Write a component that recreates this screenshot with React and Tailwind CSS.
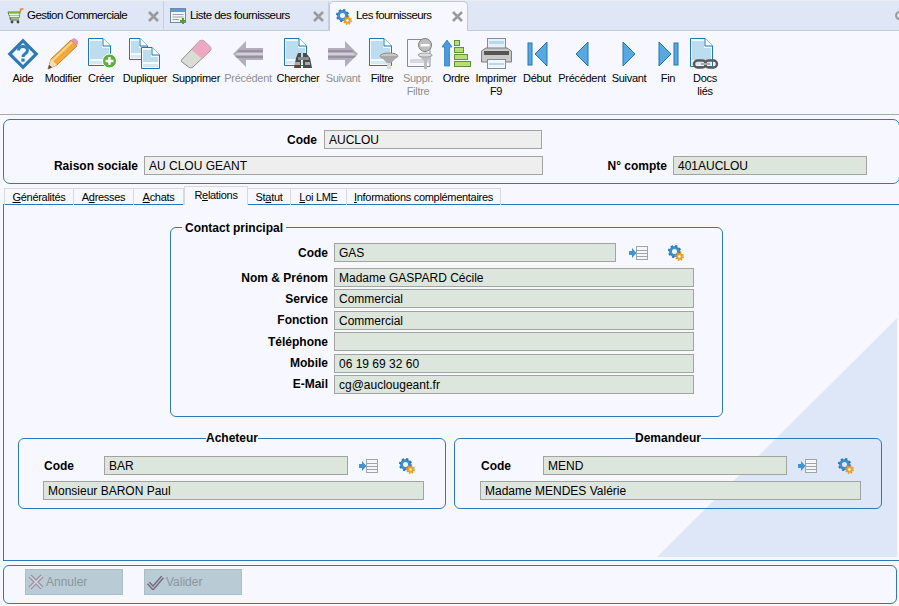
import React from 'react'

const BLUE = '#1f76b8'

function Page({ x = 0, y = 0, w = 22, h = 28 }) {
  const f = 8
  return (
    <g transform={`translate(${x} ${y})`}>
      <path d={`M.5 .5H${w - f}L${w - .5} ${f}V${h - .5}H.5Z`} fill="#f4f9fd" stroke={BLUE} />
      <path d={`M${w - f} .5V${f}H${w - .5}`} fill="#fff" stroke={BLUE} />
      <rect x="2" y="3" width={w - f - 3} height={f - 1} fill="#bcdcf0" />
      <rect x="2" y={f + 2} width={w - 4} height={h - f - 9} fill="#bcdcf0" />
      <rect x="2" y={h - 5} width={w - 4} height="3" fill="#d4e8f5" />
    </g>
  )
}

function Gears({ s = 16 }) {
  return (
    <svg width={s} height={s} viewBox="0 0 16 16">
      <circle cx="6.5" cy="6.5" r="4" fill="none" stroke="#3f8fd0" strokeWidth="3" />
      <circle cx="6.5" cy="6.5" r="5.6" fill="none" stroke="#2d78b8" strokeWidth="2" strokeDasharray="2.2 2.2" />
      <circle cx="11.5" cy="11.5" r="2.3" fill="#fff" stroke="#f0a020" strokeWidth="2" />
      <circle cx="11.5" cy="11.5" r="3.7" fill="none" stroke="#e89010" strokeWidth="1.4" strokeDasharray="1.5 1.4" />
    </svg>
  )
}

function ListArrow() {
  return (
    <svg width="19" height="14" viewBox="0 0 19 14">
      <path d="M0 5H3V2L7.5 7L3 12V9H0Z" fill="#3f94d6" />
      <rect x="7.5" y=".5" width="11" height="13" fill="#f4f6f8" stroke="#9ea4a8" />
      <path d="M8 4.5H18M8 7.5H18M8 10.5H18" stroke="#9ea4a8" />
    </svg>
  )
}

function CloseX() {
  return (
    <svg width="11" height="11" viewBox="0 0 11 11">
      <path d="M1 1L10 10M10 1L1 10" stroke="#9b9b9b" strokeWidth="2.6" />
    </svg>
  )
}

function CartIcon() {
  return (
    <svg width="17" height="16" viewBox="0 0 17 16">
      <path d="M1 4H13L12 10H3Z" fill="#a6cf72" stroke="#5c8a3a" />
      <path d="M2 6.5H12.5M2.5 8.5H12" stroke="#e9f3dc" />
      <path d="M13 4L14 1H16.5" fill="none" stroke="#e8821e" strokeWidth="1.6" />
      <path d="M3 10L3.5 12H12" fill="none" stroke="#555" />
      <circle cx="5" cy="14" r="1.4" fill="#444" />
      <circle cx="11" cy="14" r="1.4" fill="#444" />
    </svg>
  )
}

function ListIcon() {
  return (
    <svg width="17" height="17" viewBox="0 0 17 17">
      <rect x=".5" y=".5" width="15" height="14" fill="#f5f5ee" stroke="#6f8aa3" />
      <rect x="1" y="1" width="14" height="3" fill="#5f9bd0" />
      <path d="M2.5 6.5H13.5M2.5 9H13.5M2.5 11.5H9" stroke="#9aa4ae" />
      <path d="M10 12H12V10H14V12H16V14H14V16H12V14H10Z" fill="#4fa02c" />
    </svg>
  )
}

function HelpIcon() {
  return (
    <svg width="32" height="32" viewBox="0 0 32 32">
      <path d="M16 .5L31.5 16L16 31.5L.5 16Z" fill="#2f78b4" />
      <path d="M16 5L27 16L16 27L5 16Z" fill="#f2f8fd" stroke="#8cc0e6" />
      <path d="M11.5 12.5C11.5 7 20.5 7 20.5 12.5C20.5 15.5 16 15.5 16 19" fill="none" stroke="#2f7fc0" strokeWidth="3" />
      <rect x="14.4" y="20.5" width="3.2" height="3.2" fill="#2f7fc0" />
    </svg>
  )
}

function PencilIcon() {
  return (
    <svg width="32" height="32" viewBox="0 0 32 32">
      <path d="M1 31L4 21L24 2L30 8L10 27Z" fill="#f4a93a" stroke="#a9742b" strokeWidth=".8" />
      <path d="M5 23L25 4" stroke="#fbd78c" strokeWidth="2" />
      <path d="M1 31L4 21L10 27Z" fill="#f3dfb8" />
      <path d="M1 31L2.3 26.8L5 29.6Z" fill="#444" />
      <path d="M24 2L26 .6C27 0 28 0 29 1L30.6 2.8C31.4 3.8 31.4 5 30.6 6L30 8Z" fill="#e893b2" />
    </svg>
  )
}

function NewIcon() {
  return (
    <svg width="30" height="32" viewBox="0 0 30 32">
      <Page w="23" h="28" />
      <circle cx="21.5" cy="23" r="7" fill="#5db03a" stroke="#fff" />
      <path d="M17.5 23H25.5M21.5 19V27" stroke="#fff" strokeWidth="2.4" />
    </svg>
  )
}

function DupIcon() {
  return (
    <svg width="32" height="32" viewBox="0 0 32 32">
      <Page w="19" h="22" />
      <Page x="12" y="9" w="19" h="22" />
    </svg>
  )
}

function EraserIcon() {
  return (
    <svg width="32" height="30" viewBox="0 0 32 30">
      <path d="M1.5 21L19 2.5C20.5 1 22.5 1 24 2L30 7.5C31.3 9 31.3 10.5 30 12L13 28C11.5 29 10 29 8.5 28L2 23C1 22.5 1 22 1.5 21Z" fill="#dcdcd6" stroke="#8b8b85" />
      <path d="M11.5 11L19 2.5C20.5 1 22.5 1 24 2L30 7.5C31.3 9 31.3 10.5 30 12L22 19.5Z" fill="#eda9c2" />
    </svg>
  )
}

function GrayArrow({ flip }) {
  return (
    <svg width="30" height="26" viewBox="0 0 30 26" className={flip ? '-scale-x-100' : ''}>
      <path d="M0 13L13 0V7H30V19H13V26Z" fill="#b3adbd" />
      <path d="M6 9H30V11H4ZM2 15H30V17H4Z" fill="#98929f" />
      <path d="M5 12H30V14H2Z" fill="#d3d0da" />
    </svg>
  )
}

function SearchIcon() {
  return (
    <svg width="30" height="32" viewBox="0 0 30 32">
      <Page w="23" h="28" />
      <path d="M12 20L14 15H17V30H10ZM19 15H22L26 20L28 30H19Z" fill="#4a4a4a" />
      <rect x="14" y="19" width="11" height="3" fill="#8a8a8a" />
      <rect x="11" y="24" width="5" height="3" fill="#aaa" />
      <rect x="21" y="24" width="5" height="3" fill="#aaa" />
    </svg>
  )
}

function FilterIcon() {
  return (
    <svg width="30" height="32" viewBox="0 0 30 32">
      <Page w="23" h="28" />
      <ellipse cx="20" cy="18" rx="9" ry="3" fill="#c9c9c9" stroke="#8a8a8a" />
      <path d="M11 18L18 25V31H22V25L29 18Z" fill="#a9a9a9" />
      <rect x="18" y="25" width="4" height="6" fill="#d9d9d9" />
    </svg>
  )
}

function ClearFilterIcon() {
  return (
    <svg width="28" height="32" viewBox="0 0 26 32">
      <path d="M.5 1.5H15L23 8V28.5H.5Z" fill="#f7f8ff" stroke="#8a8a96" />
      <path d="M3 23H22" stroke="#d8d8e0" strokeWidth="4" />
      <circle cx="18" cy="7" r="6.5" fill="#bdbdbd" stroke="#7f7f7f" />
      <rect x="13.5" y="6" width="9" height="2.4" fill="#fff" />
      <path d="M11 17L17 23V31H20V23L26 17Z" fill="#bdbdbd" />
      <ellipse cx="18" cy="17" rx="7" ry="2" fill="#dcdcdc" stroke="#a0a0a0" />
    </svg>
  )
}

function OrderIcon() {
  return (
    <svg width="30" height="28" viewBox="0 0 30 28">
      <path d="M6 0L11 7H8.5V26H3.5V7H1Z" fill="#4a9bdc" stroke="#1f76b8" strokeWidth=".7" />
      <rect x="13.5" y=".5" width="5" height="5" fill="#b7dc7a" stroke="#5f9434" />
      <rect x="13.5" y="7.5" width="9" height="5" fill="#b7dc7a" stroke="#5f9434" />
      <rect x="13.5" y="14.5" width="13" height="5" fill="#b7dc7a" stroke="#5f9434" />
      <rect x="13.5" y="21.5" width="16" height="5" fill="#b7dc7a" stroke="#5f9434" />
    </svg>
  )
}

function PrintIcon() {
  return (
    <svg width="31" height="31" viewBox="0 0 31 31">
      <rect x="6.5" y=".5" width="18" height="11" fill="#e6f1f9" stroke="#7f8f9a" />
      <rect x="8" y="3" width="15" height="3" fill="#b9d8ee" />
      <path d="M.5 13L5 10H26L30.5 13V24H.5Z" fill="#c9c9c9" stroke="#7d7d7d" />
      <rect x="3" y="13" width="25" height="4" fill="#555" />
      <rect x="6.5" y="21.5" width="18" height="9" fill="#f1f6fa" stroke="#7f8f9a" />
      <rect x="8" y="25" width="15" height="2" fill="#b9d8ee" />
    </svg>
  )
}

function NavIcon({ kind }) {
  const shapes = {
    first: <><rect x="1" y="3" width="4" height="22" /><path d="M20 2V26L8 14Z" /></>,
    prev: <path d="M14 2V26L2 14Z" />,
    next: <path d="M2 2V26L14 14Z" />,
    last: <><path d="M1 2V26L13 14Z" /><rect x="16" y="3" width="4" height="22" /></>,
  }
  const w = kind === 'prev' || kind === 'next' ? 16 : 21
  return (
    <svg width={w} height="28" viewBox={`0 0 ${w} 28`} fill="#5aa8e2" stroke={BLUE}>
      {shapes[kind]}
    </svg>
  )
}

function DocsIcon() {
  return (
    <svg width="30" height="32" viewBox="0 0 30 32">
      <Page w="23" h="29" />
      <rect x="4" y="22.5" width="12" height="7" rx="3.5" fill="none" stroke="#5a5a5a" strokeWidth="2.4" />
      <rect x="15" y="22.5" width="12" height="7" rx="3.5" fill="none" stroke="#5a5a5a" strokeWidth="2.4" />
      <path d="M11 26H20" stroke="#aaa" strokeWidth="2" />
    </svg>
  )
}

const tools = [
  { label: 'Aide', w: 'w-[40px]', icon: <HelpIcon /> },
  { label: 'Modifier', w: 'w-[40px]', icon: <PencilIcon /> },
  { label: 'Créer', w: 'w-[36px]', icon: <NewIcon />, shift: 'ml-[3px]' },
  { label: 'Dupliquer', w: 'w-[52px]', icon: <DupIcon /> },
  { label: 'Supprimer', w: 'w-[50px]', icon: <EraserIcon /> },
  { label: 'Précédent', w: 'w-[54px]', icon: <GrayArrow />, off: true },
  { label: 'Chercher', w: 'w-[46px]', icon: <SearchIcon />, shift: 'ml-[2px]' },
  { label: 'Suivant', w: 'w-[44px]', icon: <GrayArrow flip />, off: true },
  { label: 'Filtre', w: 'w-[34px]', icon: <FilterIcon />, shift: 'ml-[3px]' },
  { label: 'Suppr. Filtre', w: 'w-[38px]', icon: <ClearFilterIcon />, off: true, shift: 'ml-[3px]' },
  { label: 'Ordre', w: 'w-[38px]', icon: <OrderIcon /> },
  { label: 'Imprimer F9', w: 'w-[42px]', icon: <PrintIcon /> },
  { label: 'Début', w: 'w-[40px]', icon: <NavIcon kind="first" /> },
  { label: 'Précédent', w: 'w-[50px]', icon: <NavIcon kind="prev" /> },
  { label: 'Suivant', w: 'w-[44px]', icon: <NavIcon kind="next" /> },
  { label: 'Fin', w: 'w-[34px]', icon: <NavIcon kind="last" /> },
  { label: 'Docs liés', w: 'w-[40px]', icon: <DocsIcon /> },
]

const docTabs = [
  { label: 'Gestion Commerciale', w: 'w-[164px]', pl: 'pl-[7px]', icon: <CartIcon /> },
  { label: 'Liste des fournisseurs', w: 'w-[165px]', pl: 'pl-[6px]', icon: <ListIcon /> },
  { label: 'Les fournisseurs', w: 'w-[139px]', pl: 'pl-[6px]', icon: <Gears />, active: true },
]

const contactRows = [
  ['Nom & Prénom', 'Madame GASPARD Cécile'],
  ['Service', 'Commercial'],
  ['Fonction', 'Commercial'],
  ['Téléphone', ''],
  ['Mobile', '06 19 69 32 60'],
  ['E-Mail', 'cg@auclougeant.fr'],
]

function Field({ value, className }) {
  return (
    <div className={`h-[19px] box-border border border-[#a3a3a0] px-[4px] text-[12px] leading-[18px] text-black whitespace-nowrap ${className}`}>
      {value}
    </div>
  )
}

function Person({ title, code, name, pad, labelW, nameMl }) {
  return (
    <div className="relative w-[428px] h-[71px] rounded-[6px] border border-[#2f78b8]">
      <span className="absolute -top-[8px] left-1/2 -translate-x-1/2 bg-[#f7f8ff] font-bold text-[12px] leading-[14px]">{title}</span>
      <div className={`flex items-center pt-[17px] ${pad}`}>
        <span className={`font-bold text-[12px] ${labelW}`}>Code</span>
        <Field value={code} className="w-[244px] bg-[#dde6dc]" />
        <span className="ml-[11px]"><ListArrow /></span>
        <span className="ml-[21px]"><Gears /></span>
      </div>
      <Field value={name} className={`mt-[6px] w-[381px] bg-[#dde6dc] ${nameMl}`} />
    </div>
  )
}

export default function App() {
  return (
    <div className="relative w-[899px] h-[606px] overflow-hidden bg-[#f7f8ff] text-black font-['Liberation_Sans',Arial,sans-serif]">
      <div className="h-[1px] bg-[#eeeeee]" />

      {/* onglets fenêtres */}
      <div className="flex h-[30px] bg-[#dfe7f6] border-b border-[#bccbdc]">
        {docTabs.map((t) => (
          <div
            key={t.label}
            className={`flex items-center h-[30px] ${t.w} ${t.pl} ${t.active ? 'bg-[#f7f8ff] rounded-t-[5px] border-x border-t border-[#bccbdc]' : 'border-r border-[#c7d1dd]'}`}
          >
            <span className="w-[20px] flex">{t.icon}</span>
            <span className="pb-[1px] text-[11.5px] tracking-[-0.55px] whitespace-nowrap">{t.label}</span>
            <span className="ml-auto mr-[4px] flex"><CloseX /></span>
          </div>
        ))}
        <span className="ml-auto -mr-[5px] mt-[10px] w-[9px] h-[9px] rounded-full border-2 border-[#9b9b9b]" />
      </div>

      {/* barre d'outils */}
      <div className="flex h-[84px] pl-[3px] pt-[6px] border-b border-[#a9a9a9]">
        {tools.map((t, i) => (
          <div key={i} className={`flex flex-col items-center shrink-0 ${t.w}`}>
            <div className={`h-[33px] flex items-center justify-center ${t.shift || ''}`}>{t.icon}</div>
            <div className={`mt-[2px] text-center text-[11px] tracking-[-0.3px] leading-[13px] whitespace-normal ${t.off ? 'text-[#8f8f8f]' : 'text-black'}`}>
              {t.label}
            </div>
          </div>
        ))}
      </div>

      {/* entête fournisseur */}
      <div className="mt-[4px] ml-[3px] w-[897px] h-[65px] rounded-[7px] border border-[#2f78b8]">
        <div className="flex items-center pt-[10px]">
          <span className="w-[313px] text-right font-bold text-[12px]">Code</span>
          <Field value="AUCLOU" className="ml-[7px] w-[218px] bg-[#eeeeee]" />
        </div>
        <div className="flex items-center mt-[7px]">
          <span className="w-[134px] text-right font-bold text-[12px]">Raison sociale</span>
          <Field value="AU CLOU GEANT" className="ml-[6px] w-[399px] bg-[#eeeeee]" />
          <span className="w-[124px] text-right font-bold text-[12px]">N° compte</span>
          <Field value="401AUCLOU" className="ml-[6px] w-[194px] bg-[#dde6dc]" />
        </div>
      </div>

      {/* onglets fiche */}
      <div className="relative z-10 flex items-end h-[19px] mt-[2px] ml-[4px] text-[11px] tracking-[-0.3px] leading-[16px]">
        <div className="w-[70px] h-[17px] text-center border border-b-0 border-[#d9d9d9]"><u>G</u>énéralités</div>
        <div className="w-[60px] h-[17px] text-center border-r border-t border-[#d9d9d9]">A<u>d</u>resses</div>
        <div className="w-[50px] h-[17px] text-center border-r border-t border-[#d9d9d9]"><u>A</u>chats</div>
        <div className="w-[64px] h-[19px] text-center bg-[#f7f8ff] border-x border-t border-[#d9d9d9] leading-[17px]">R<u>e</u>lations</div>
        <div className="w-[43px] h-[17px] text-center border-r border-t border-[#d9d9d9]">St<u>a</u>tut</div>
        <div className="w-[56px] h-[17px] text-center border-r border-t border-[#d9d9d9]"><u>L</u>oi LME</div>
        <div className="w-[154px] h-[17px] text-center border-r border-t border-[#d9d9d9]"><u>I</u>nformations complémentaires</div>
      </div>

      {/* panneau Relations */}
      <div className="relative -mt-px ml-[3px] w-[900px] h-[357px] border-l border-y border-[#2f78b8] pt-[22px]">
        <div className="absolute right-[6px] bottom-[3px] w-[240px] h-[239px] bg-[#dee7f7] [clip-path:polygon(100%_0,100%_100%,0_100%)]" />

        <div className="relative ml-[166px] w-[553px] h-[190px] rounded-[6px] border border-[#2f78b8] pt-[15px]">
          <span className="absolute -top-[7px] left-[11px] px-[3px] bg-[#f7f8ff] font-bold text-[12px] leading-[14px]">Contact principal</span>
          <div className="flex items-center">
            <span className="w-[157px] text-right font-bold text-[12px]">Code</span>
            <Field value="GAS" className="ml-[6px] w-[282px] bg-[#dde6dc]" />
            <span className="ml-[13px]"><ListArrow /></span>
            <span className="ml-[20px]"><Gears /></span>
          </div>
          <div className="mt-[6px] flex flex-col gap-[2.4px]">
            {contactRows.map(([label, value]) => (
              <div key={label} className="flex items-center">
                <span className="w-[157px] text-right font-bold text-[12px]">{label}</span>
                <Field value={value} className="ml-[6px] w-[360px] bg-[#dde6dc]" />
              </div>
            ))}
          </div>
        </div>

        <div className="relative flex mt-[21px] ml-[14px] gap-[8px]">
          <Person title="Acheteur" code="BAR" name="Monsieur BARON Paul" pad="pl-[25px]" labelW="w-[60px]" nameMl="ml-[24px]" />
          <Person title="Demandeur" code="MEND" name="Madame MENDES Valérie" pad="pl-[26px]" labelW="w-[62px]" nameMl="ml-[25px]" />
        </div>
      </div>

      {/* pied */}
      <div className="flex gap-[21px] mt-[4px] ml-[3px] w-[894px] h-[39px] rounded-[6px] border border-[#2f78b8] pt-[3px] pl-[21px]">
        <div className="flex items-center w-[98px] h-[26px] bg-[#b9cbd4] border border-[#adbdc5] text-[12px] text-[#8a969e] pl-[2px]">
          <svg width="16" height="16" viewBox="0 0 16 16" className="mr-[2px]">
            <path d="M2 2L14 14M14 2L2 14" stroke="#9a93a5" strokeWidth="4" />
            <path d="M2 2L14 14M14 2L2 14" stroke="#d6d3dc" strokeWidth="1.6" />
          </svg>
          Annuler
        </div>
        <div className="flex items-center w-[98px] h-[26px] bg-[#b9cbd4] border border-[#adbdc5] text-[12px] text-[#8a969e] pl-[2px]">
          <svg width="17" height="16" viewBox="0 0 17 16" className="mr-[2px]">
            <path d="M1.5 9L6 14L15.5 3" fill="none" stroke="#6f6a80" strokeWidth="4" />
            <path d="M1.5 9L6 14L15.5 3" fill="none" stroke="#b9b5c6" strokeWidth="1.2" />
          </svg>
          Valider
        </div>
      </div>
    </div>
  )
}
